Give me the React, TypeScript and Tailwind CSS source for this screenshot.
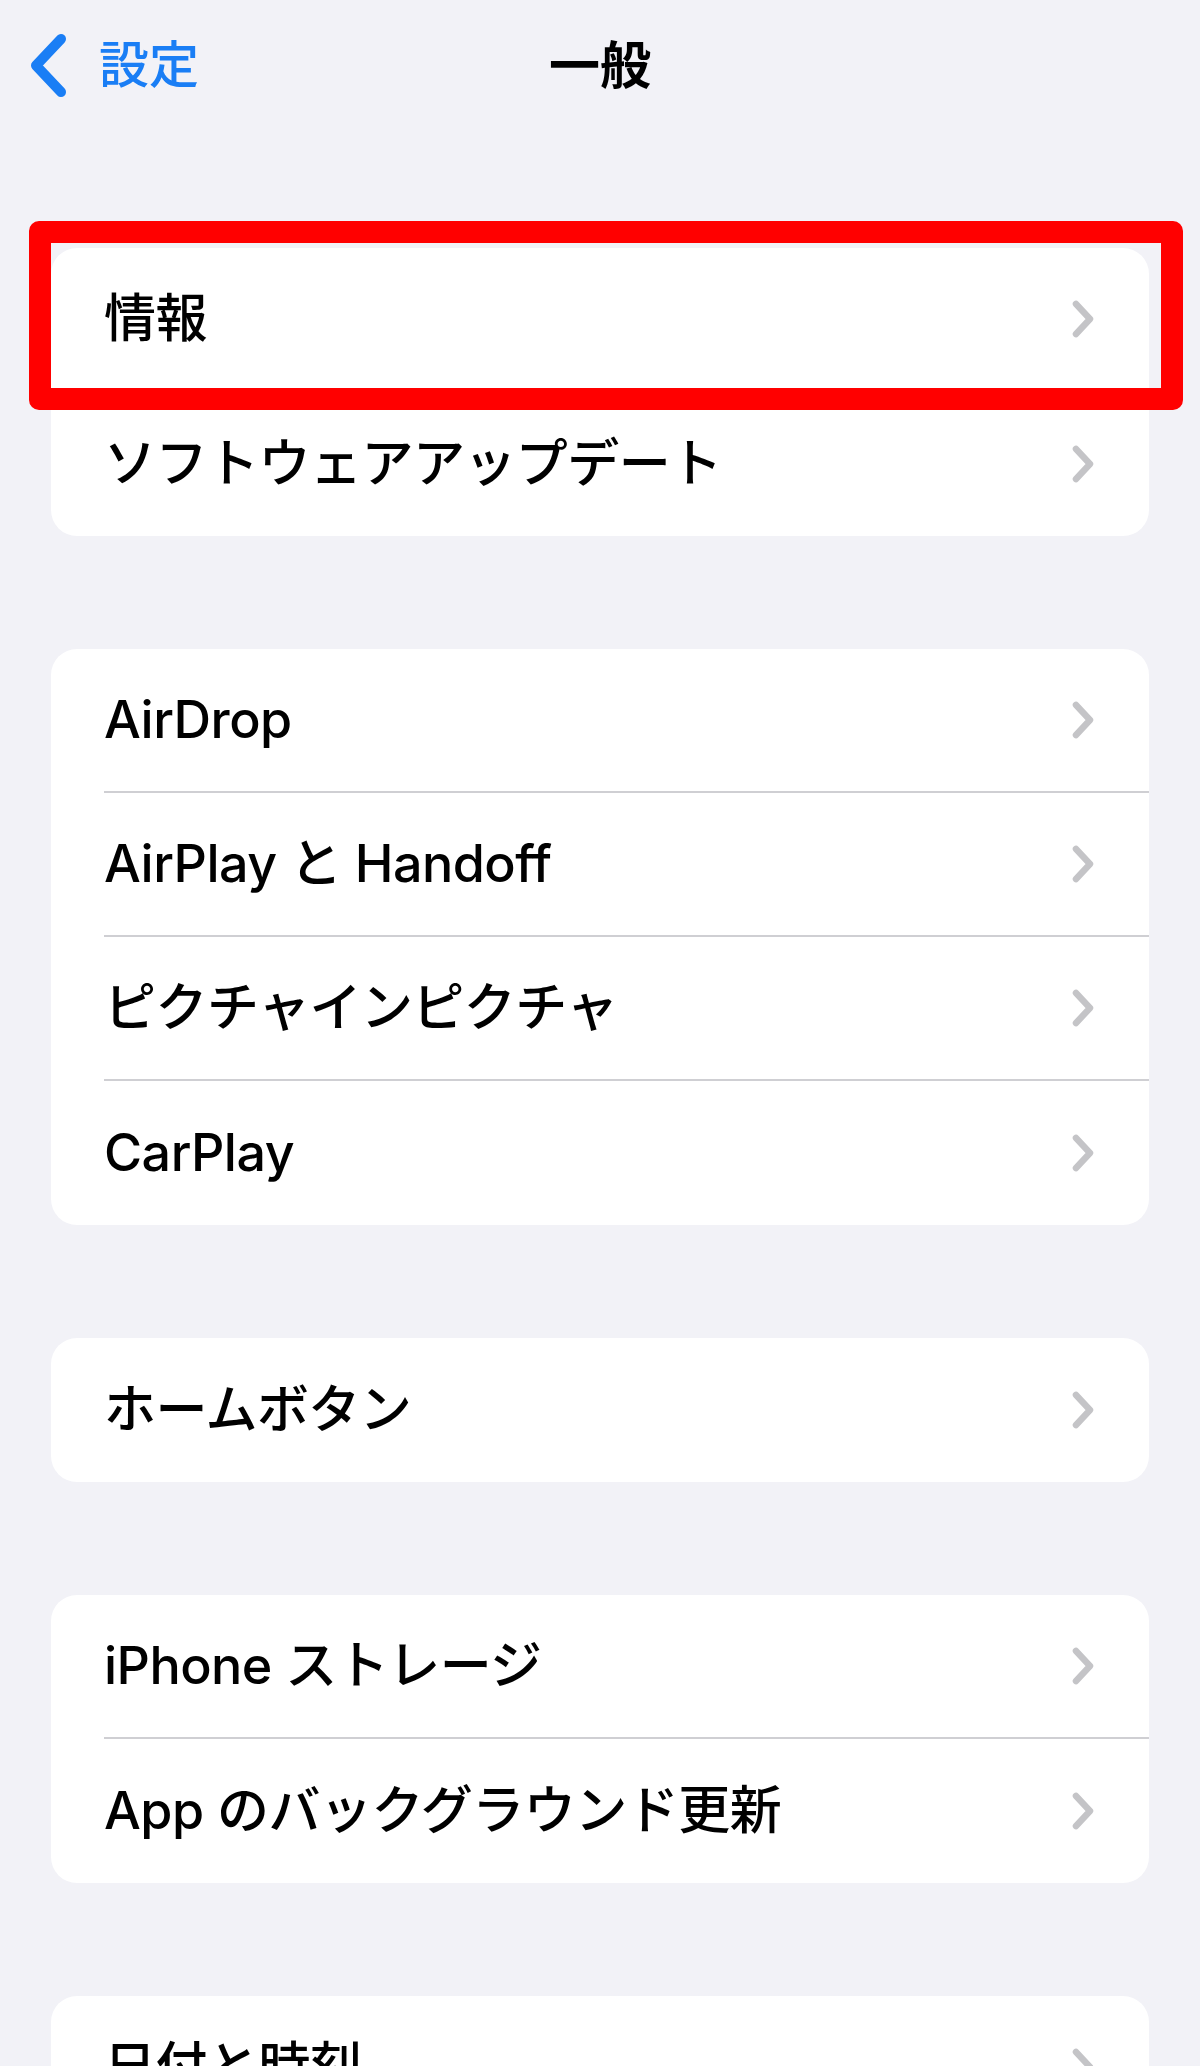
const FONT = 'Inter, "Noto Sans CJK JP", "Noto Sans", sans-serif';

type Row = { label: string; boxed?: boolean };

const GROUPS: Row[][] = [
  [{ label: "情報", boxed: true }, { label: "ソフトウェアアップデート" }],
  [
    { label: "AirDrop" },
    { label: "AirPlay と Handoff" },
    { label: "ピクチャインピクチャ" },
    { label: "CarPlay" },
  ],
  [{ label: "ホームボタン" }],
  [{ label: "iPhone ストレージ" }, { label: "App のバックグラウンド更新" }],
  [{ label: "日付と時刻" }, { label: "キーボード" }],
];

function Chevron() {
  return (
    <svg width="24" height="40" viewBox="0 0 24 40" fill="none" className="shrink-0">
      <polyline
        points="5,5 19,20 5,35"
        stroke="#c4c4c7"
        strokeWidth="6.5"
        strokeLinecap="round"
        strokeLinejoin="round"
      />
    </svg>
  );
}

function BackChevron() {
  return (
    <svg width="38" height="65" viewBox="0 0 38 65" fill="none" className="shrink-0">
      <polyline
        points="32,6 7,32.5 32,59"
        stroke="#1a7ef5"
        strokeWidth="10"
        strokeLinecap="round"
        strokeLinejoin="round"
      />
    </svg>
  );
}

function SettingsRow({ row, last }: { row: Row; last: boolean }) {
  return (
    <div className="relative h-[144px] pl-[53px]">
      <div
        className={
          last
            ? "flex h-full items-center justify-between pr-[54px]"
            : "flex h-full items-center justify-between border-b-2 border-[#cfcfd3] pr-[54px]"
        }
      >
        <span className="text-[52px] font-medium leading-none tracking-[-0.01em] text-black">
          {row.label}
        </span>
        <Chevron />
      </div>
      {row.boxed && (
        <div className="pointer-events-none absolute -top-[27px] -right-[34px] -bottom-[18px] -left-[22px] rounded-[10px] border-[22px] border-[#ff0000]" />
      )}
    </div>
  );
}

export default function App() {
  return (
    <div className="h-[2066px] overflow-hidden bg-[#f2f2f7]" style={{ fontFamily: FONT }}>
      <header className="relative flex h-[130px] items-center pl-[29px]">
        <div className="flex items-center gap-[32px]">
          <BackChevron />
          <span className="text-[50px] font-medium leading-none text-[#1a7ef5]">設定</span>
        </div>
        <h1 className="absolute left-1/2 top-1/2 -translate-x-1/2 -translate-y-1/2 text-[51px] font-bold leading-none text-black">
          一般
        </h1>
      </header>

      <main className="flex flex-col gap-[113px] px-[51px] pt-[118px]">
        {GROUPS.map((group, gi) => (
          <section key={gi} className="rounded-[26px] bg-white">
            {group.map((row, ri) => (
              <SettingsRow key={row.label} row={row} last={ri === group.length - 1} />
            ))}
          </section>
        ))}
      </main>
    </div>
  );
}
